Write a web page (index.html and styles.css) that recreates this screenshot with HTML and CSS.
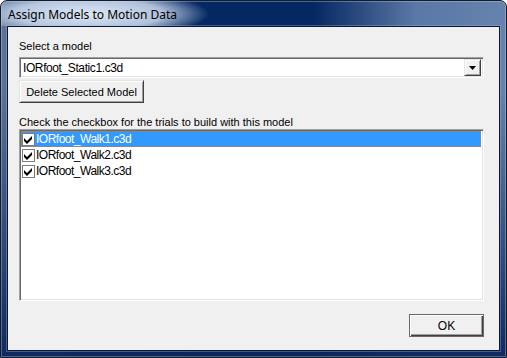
FILE: index.html
```html
<!DOCTYPE html>
<html>
  <head>
    <meta http-equiv="Content-Type" content="text/html;charset=utf-8" />
    <title>Assign Models to Motion Data</title>
    <link rel="stylesheet" href="styles.css">
  </head>

  <body>
    <div class="window">
      <div class="titlebar">
        <span class="title">Assign Models to Motion Data</span>
      </div>

      <div class="client">
        <div class="label firstLabel">Select a model</div>

        <div class="combo">
          <span class="comboText">IORfoot_Static1.c3d</span>
          <span class="dropBtn">
            <svg width="7" height="4" viewBox="0 0 7 4"><path d="M0 0 H7 L3.5 4 Z" fill="#000"/></svg>
          </span>
        </div>

        <div class="btn deleteBtn">Delete Selected Model</div>

        <div class="label listLabel">Check the checkbox for the trials to build with this model</div>

        <ul class="listbox">
          <li class="item selected">
            <span class="check"><svg width="11" height="11" viewBox="0 0 11 11"><path d="M1 4 L4 7 L9 2 L9 5 L4 10 L1 7 Z" fill="#000"/></svg></span>
            <span class="itemText">IORfoot_Walk1.c3d</span>
          </li>
          <li class="item">
            <span class="check"><svg width="11" height="11" viewBox="0 0 11 11"><path d="M1 4 L4 7 L9 2 L9 5 L4 10 L1 7 Z" fill="#000"/></svg></span>
            <span class="itemText">IORfoot_Walk2.c3d</span>
          </li>
          <li class="item">
            <span class="check"><svg width="11" height="11" viewBox="0 0 11 11"><path d="M1 4 L4 7 L9 2 L9 5 L4 10 L1 7 Z" fill="#000"/></svg></span>
            <span class="itemText">IORfoot_Walk3.c3d</span>
          </li>
        </ul>

        <div class="footer">
          <div class="btn okBtn">OK</div>
        </div>
      </div> <!-- end client -->
    </div> <!-- end window -->
  </body>
</html>
```

FILE: styles.css
```css
html,
body {
  margin: 0;
  padding: 0;
  background: #ffffff;
}

body {
  width: 507px;
  height: 358px;
  overflow: hidden;
  font-family: "Liberation Sans", Arial, sans-serif;
}

ul,
li {
  margin: 0;
  padding: 0;
  list-style: none;
}

.window {
  box-sizing: border-box;
  width: 507px;
  height: 358px;
  padding: 0 6px 6px 6px;
  border: 1px solid #141c2c;
  border-radius: 7px 7px 0 0;
  box-shadow: inset 0 0 0 1px rgba(200, 215, 235, 0.35);
  background:
    linear-gradient(to bottom, rgba(10, 36, 92, 0) 0, rgba(10, 36, 92, 0) 25%, rgba(10, 38, 94, 0.95) 100%),
    linear-gradient(to right, #5d7398 0%, #23447a 22%, #062862 40%, #062862 62%, #5a78a6 82%, #6683ae 100%);
  display: flex;
  flex-direction: column;
}

.titlebar {
  height: 25px;
  margin: 0 -6px;
  padding-left: 7px;
  display: flex;
  align-items: center;
  border-radius: 6px 6px 0 0;
  background:
    radial-gradient(ellipse 120px 24px at 88px 13px, rgba(232, 240, 250, 0.95) 0%, rgba(200, 216, 238, 0.85) 62%, rgba(200, 216, 238, 0) 100%);
}

.title {
  font-family: "Noto Sans", "Liberation Sans", sans-serif;
  font-size: 12px;
  color: #000000;
  margin-top: 1px;
}

.client {
  flex: 1;
  border: 1px solid #0b1730;
  background: #f0f0f0;
  padding: 13px 15px 0 11px;
  font-size: 11px;
  color: #000000;
  box-shadow: 0 0 0 1px rgba(170, 190, 220, 0.35);
}

.label {
  line-height: 13px;
  height: 13px;
}

.combo {
  margin-top: 4px;
  height: 21px;
  box-sizing: border-box;
  border: 1px solid;
  border-color: #a0a0a0 #ffffff #ffffff #a0a0a0;
  box-shadow: inset 1px 1px #696969, inset -1px -1px #e3e3e3;
  background: #ffffff;
  display: flex;
  align-items: center;
  padding: 0 2px 0 3px;
}

.comboText {
  flex: 1;
  font-size: 12px;
  letter-spacing: -0.4px;
}

.dropBtn {
  width: 17px;
  height: 17px;
  box-sizing: border-box;
  background: #f0f0f0;
  border: 1px solid;
  border-color: #e3e3e3 #404040 #404040 #e3e3e3;
  box-shadow: inset 1px 1px #ffffff, inset -1px -1px #a0a0a0;
  display: flex;
  align-items: center;
  justify-content: center;
}

.btn {
  box-sizing: border-box;
  height: 23px;
  background: #f0f0f0;
  display: flex;
  align-items: center;
  justify-content: center;
  font-size: 11px;
}

.deleteBtn {
  margin-top: 2px;
  width: 125px;
  border: 1px solid;
  border-color: #e3e3e3 #404040 #404040 #e3e3e3;
  box-shadow: inset 1px 1px #ffffff, inset -1px -1px #a0a0a0;
}

.listLabel {
  margin-top: 13px;
}

.listbox {
  height: 172px;
  box-sizing: border-box;
  border: 1px solid;
  border-color: #a0a0a0 #ffffff #ffffff #a0a0a0;
  box-shadow: inset 1px 1px #696969, inset -1px -1px #e3e3e3;
  background: #ffffff;
  padding: 1px 2px 1px 1px;
}

.item {
  height: 16px;
  display: flex;
  align-items: center;
  box-sizing: border-box;
}

.selected {
  background: #3399ff;
  color: #ffffff;
  outline: 1px dotted #d2781e;
  outline-offset: -1px;
}

.check {
  width: 13px;
  height: 13px;
  box-sizing: border-box;
  margin-left: 1px;
  border: 1px solid #7b7b7b;
  background: #ffffff;
  display: flex;
  align-items: center;
  justify-content: center;
}

.itemText {
  margin-left: 1px;
  font-size: 12px;
  letter-spacing: -0.5px;
}

.footer {
  margin-top: 13px;
  display: flex;
  justify-content: flex-end;
}

.okBtn {
  width: 75px;
  border: 1px solid #6a6a6a;
  box-shadow: inset 1px 1px #ffffff, inset -1px -1px #404040, inset -2px -2px #a0a0a0;
  font-size: 12px;
}
```
